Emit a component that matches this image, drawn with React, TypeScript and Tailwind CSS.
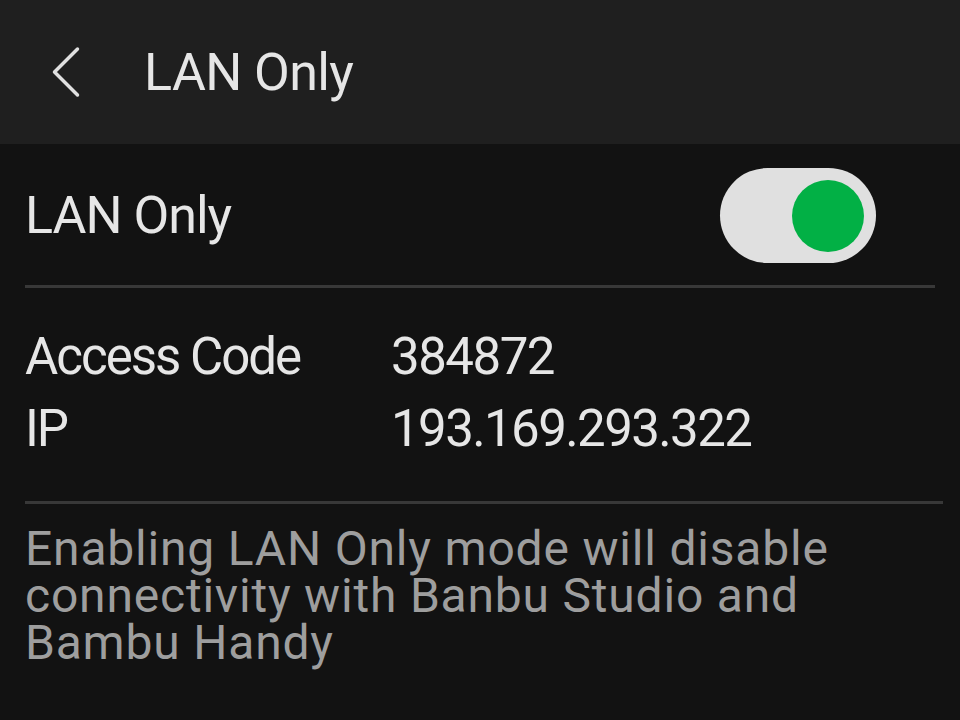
import React from "react";

export default function App() {
  return (
    <div
      className="w-[960px] h-[720px] bg-[#121212] overflow-hidden text-[#e6e6e6]"
      style={{ fontFamily: "Roboto, 'Noto Sans', sans-serif" }}
    >
      <header className="h-[144px] bg-[#1f1f1f] flex items-center">
        <div className="w-[144px] h-full flex items-center pl-[50px]">
          <svg width="32" height="52" viewBox="0 0 32 52" fill="none">
            <polyline
              points="27.5,3 4.5,26 27.5,49"
              stroke="#e0e0e0"
              strokeWidth="3.5"
              strokeLinecap="round"
              strokeLinejoin="round"
            />
          </svg>
        </div>
        <h1 className="text-[52px] leading-none font-normal mt-[2px] tracking-[-0.6px]">LAN Only</h1>
      </header>

      <main className="pl-[25px] pr-[17px]">
        <div className="flex items-center justify-between pt-[24px] pb-[22px] pr-[67px]">
          <span className="text-[52px] leading-none tracking-[-1px]">LAN Only</span>
          <div className="w-[156px] h-[95px] rounded-full bg-[#e0e0e0] flex items-center justify-end pr-[12px]">
            <div className="w-[72px] h-[72px] rounded-full bg-[#02b045]" />
          </div>
        </div>
        <div className="h-[3px] bg-[#383838] mr-[8px]" />

        <div className="pt-[33px] pb-[36px] text-[51px] leading-[72px]">
          <div className="grid grid-cols-[366px_1fr]">
            <span className="tracking-[-2px]">Access Code</span>
            <span className="tracking-[-1.5px]">384872</span>
          </div>
          <div className="grid grid-cols-[366px_1fr]">
            <span className="tracking-[-2px]">IP</span>
            <span className="tracking-[-1.6px]">193.169.293.322</span>
          </div>
        </div>
        <div className="h-[3px] bg-[#383838]" />

        <p className="pt-[21px] text-[48px] leading-[47px] tracking-[0.8px] text-[#9e9e9e] whitespace-nowrap">
          Enabling LAN Only mode will disable
          <br />
          connectivity with Banbu Studio and
          <br />
          Bambu Handy
        </p>
      </main>
    </div>
  );
}
